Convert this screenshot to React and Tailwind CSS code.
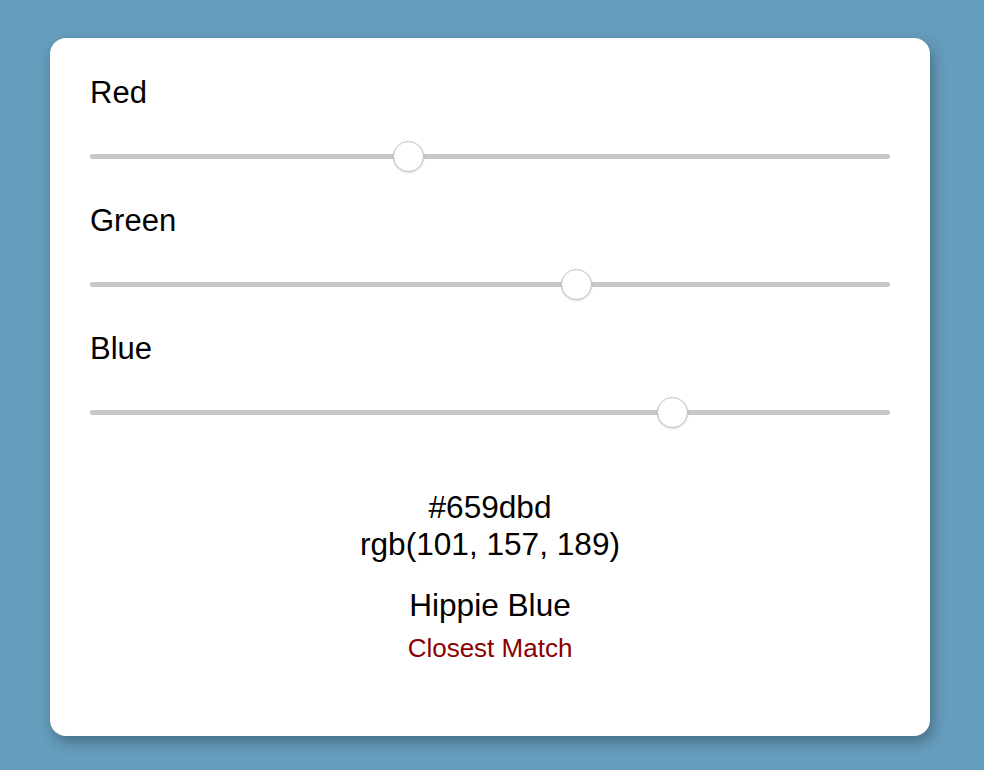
import React, { useState } from "react";

// slider tylko wizualny - bez input range, zeby kontrolowac wyglad
const ColorSlider = ({ label, value }) => {
  const pct = value / 255;
  return (
    <div>
      <div className="h-[37px] leading-[37px] text-[31px]">{label}</div>
      <div className="relative h-[91px] flex items-center">
        <div className="w-full h-[5px] rounded-full bg-[#c8c8c8]" />
        <div
          className="absolute top-[30px] w-[31px] h-[31px] rounded-full bg-white border border-[#c4c4c4] shadow-[0_1px_2px_rgba(0,0,0,0.15)]"
          style={{ left: `${pct * (800 - 35)}px` }}
        />
      </div>
    </div>
  );
};

const App = () => {
  const [rgb] = useState({ r: 101, g: 157, b: 189 });
  const hex =
    "#" + [rgb.r, rgb.g, rgb.b].map((v) => v.toString(16).padStart(2, "0")).join("");

  return (
    <div
      className="min-h-[770px] bg-[#659dbd] pt-[38px] pl-[50px]"
      style={{ fontFamily: '"Liberation Sans", Arial, sans-serif' }}
    >
      <div className="w-[880px] h-[698px] bg-white rounded-2xl shadow-[3px_6px_14px_rgba(0,0,0,0.3)] px-10 pt-9 text-black">
        <ColorSlider label="Red" value={rgb.r} />
        <ColorSlider label="Green" value={rgb.g} />
        <ColorSlider label="Blue" value={rgb.b} />

        <div className="mt-[31px] flex flex-col items-center text-center">
          <div className="text-[31.6px] leading-[37px]">{hex}</div>
          <div className="text-[31.6px] leading-[37px]">
            rgb({rgb.r}, {rgb.g}, {rgb.b})
          </div>
          <div className="mt-6 text-[31.6px] leading-[37px]">Hippie Blue</div>
          <div className="mt-[9px] text-[26px] leading-[30px] text-[#8b0000]">Closest Match</div>
        </div>
      </div>
    </div>
  );
};

export default App;
